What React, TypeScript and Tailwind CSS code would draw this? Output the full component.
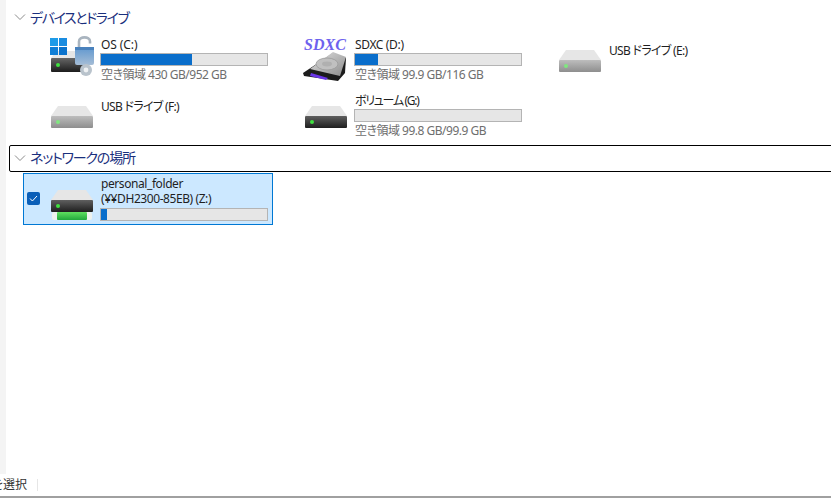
import React from 'react'

const font = "[font-family:'Noto_Sans','Noto_Sans_CJK_JP',sans-serif] [font-feature-settings:'palt']"

type Drive = {
    name: string
    icon: 'os' | 'sdxc' | 'dark' | 'usb'
    nameClass: string
    free?: string
    used?: number
}

const drives: Drive[] = [
    { name: 'OS (C:)', icon: 'os', nameClass: 'tracking-[-0.1px]', free: '空き領域 430 GB/952 GB', used: 91 },
    { name: 'SDXC (D:)', icon: 'sdxc', nameClass: 'tracking-[-0.35px]', free: '空き領域 99.9 GB/116 GB', used: 23 },
    { name: 'USB ドライブ (E:)', icon: 'usb', nameClass: 'tracking-[-0.7px]' },
    { name: 'USB ドライブ (F:)', icon: 'usb', nameClass: 'tracking-[-0.7px]' },
    { name: 'ボリューム (G:)', icon: 'dark', nameClass: 'tracking-[-1.3px]', free: '空き領域 99.8 GB/99.9 GB', used: 0 },
]

function Chevron() {
    return (
        <svg width="12" height="8" viewBox="0 0 12 8" className="shrink-0">
            <path d="M1 1.5 L6 6.5 L11 1.5" fill="none" stroke="#8c8c8c" strokeWidth="1" />
        </svg>
    )
}

// 共通のドライブ本体
function DriveBody({ id, dark }: { id: string; dark: boolean }) {
    return (
        <>
            <defs>
                <linearGradient id={id} x1="0" y1="0" x2="0" y2="1">
                    <stop offset="0" stopColor={dark ? '#5f5f5f' : '#bdbdbd'} />
                    <stop offset="1" stopColor={dark ? '#1e1e1e' : '#8e8e8e'} />
                </linearGradient>
            </defs>
            <path d="M10 16 H38 L45 26 H3 Z" fill="#e6e6e6" />
            <rect x="3" y="26" width="42" height="12" rx="1" fill={`url(#${id})`} />
            <circle cx="10" cy="32" r="2" fill={dark ? '#3fe03f' : '#7fe87f'} />
        </>
    )
}

function OsIcon() {
    return (
        <svg width="48" height="48" viewBox="0 0 48 48">
            <defs>
                <linearGradient id="osBody" x1="0" y1="0" x2="0" y2="1">
                    <stop offset="0" stopColor="#666666" />
                    <stop offset="1" stopColor="#1c1c1c" />
                </linearGradient>
                <linearGradient id="lockBody" x1="0" y1="0" x2="0" y2="1">
                    <stop offset="0" stopColor="#5f97cf" />
                    <stop offset="1" stopColor="#a5bdd6" />
                </linearGradient>
            </defs>
            <path d="M8 17 H30 L36 24 H3 Z" fill="#e6e6e6" />
            <rect x="3" y="24" width="38" height="14" rx="1" fill="url(#osBody)" />
            <circle cx="10" cy="31" r="2" fill="#3fe03f" />
            <rect x="2" y="4" width="8" height="8" fill="#1e9be8" />
            <rect x="11" y="4" width="8" height="8" fill="#1a8ce0" />
            <rect x="2" y="13" width="8" height="8" fill="#0f7ed6" />
            <rect x="11" y="13" width="8" height="8" fill="#0a72cc" />
            <path d="M31 13 V7.5 C31 2 42 2 42 7.5 V9.5" fill="none" stroke="#a9b4bf" strokeWidth="2.6" />
            <rect x="27" y="13" width="19" height="18" rx="2" fill="url(#lockBody)" />
            <rect x="27" y="13" width="19" height="3" fill="#4a82bd" />
            <circle cx="38" cy="36" r="6" fill="#b9c3cc" />
            <circle cx="38" cy="36" r="2.4" fill="#eef1f3" />
        </svg>
    )
}

function SdxcIcon() {
    return (
        <svg width="50" height="50" viewBox="0 0 50 50" className="overflow-visible">
            <defs>
                <linearGradient id="sdTop" x1="0" y1="0" x2="1" y2="1">
                    <stop offset="0" stopColor="#e2e2e2" />
                    <stop offset="1" stopColor="#8c8c8c" />
                </linearGradient>
            </defs>
            <path d="M31 19 L44 24 L43 39 L36 47 L2 42 L1 39 Z" fill="#1c1c1c" />
            <path d="M31 18 L44 23 L38 42 L8 35 Z" fill="url(#sdTop)" />
            <ellipse cx="25" cy="30" rx="11" ry="6" fill="#c0c0c0" stroke="#9a9a9a" strokeWidth="0.8" />
            <ellipse cx="25" cy="30" rx="5" ry="2.4" fill="#b0b0b0" />
            <path d="M9 39 L26 44 L24 46 L8 42 Z" fill="#6a35e8" />
            <text x="2" y="16" fontFamily="'Liberation Serif', serif" fontStyle="italic" fontWeight="bold" fontSize="16" fill="#6e62ee">SDXC</text>
        </svg>
    )
}

function NetworkIcon() {
    return (
        <svg width="48" height="48" viewBox="0 0 48 48">
            <defs>
                <linearGradient id="netGreen" x1="0" y1="0" x2="0" y2="1">
                    <stop offset="0" stopColor="#5fe05f" />
                    <stop offset="1" stopColor="#21a83c" />
                </linearGradient>
            </defs>
            <DriveBody id="netBody" dark={true} />
            <rect x="4" y="38" width="40" height="8" rx="2" fill="#eef2ee" />
            <rect x="9" y="38" width="30" height="8" rx="1" fill="url(#netGreen)" />
        </svg>
    )
}

function DriveIcon({ icon }: { icon: Drive['icon'] }) {
    if (icon === 'os') return <OsIcon />
    if (icon === 'sdxc') return <SdxcIcon />
    return (
        <svg width="48" height="48" viewBox="0 0 48 48">
            <DriveBody id={`body-${icon}`} dark={icon === 'dark'} />
        </svg>
    )
}

function Bar({ used }: { used: number }) {
    return (
        <div className="h-[13px] w-[168px] border border-[#b4b4b4] bg-[#e6e6e6]">
            <div className="h-full bg-[#0a6ecb]" style={{ width: used }}></div>
        </div>
    )
}

export default function App() {
    return (
        <div className={`flex h-[498px] w-[831px] flex-col overflow-hidden bg-white ${font}`}>
            <div className="flex flex-1">
                <div className="w-[6px] shrink-0 bg-[#f4f4f4]"></div>
                <div className="min-w-0 flex-1">
                    <div className="mt-[3px] mb-[3px] flex h-[28px] items-center gap-[4px] pl-[8px] text-[14px] text-[#1a2f7d]">
                        <Chevron />
                        <span className="tracking-[-1.4px]">デバイスとドライブ</span>
                    </div>

                    {/* ドライブ一覧 */}
                    <div className="ml-[18px] grid grid-cols-[254px_254px_254px] grid-rows-[56px_55px]">
                        {drives.map((d) => (
                            <div key={d.name} className="flex pl-[24px]">
                                <div className="h-[48px] w-[48px] shrink-0">
                                    <DriveIcon icon={d.icon} />
                                </div>
                                <div className={`ml-[4px] text-[12px] leading-[16px] ${d.free ? 'pt-[3px]' : 'pt-[9px]'}`}>
                                    <div className={`pl-[1px] text-[#1f1f1f] ${d.nameClass}`}>{d.name}</div>
                                    {d.free && (
                                        <>
                                            <Bar used={d.used ?? 0} />
                                            <div className="mt-[1px] pl-[1px] tracking-[-0.5px] text-[#6e6e6e]">{d.free}</div>
                                        </>
                                    )}
                                </div>
                            </div>
                        ))}
                    </div>

                    <div className="ml-[3px] -mr-[4px] flex h-[27px] items-center gap-[4px] rounded-[2px] border border-black pb-[2px] pl-[4px] text-[14px] text-[#1a2f7d]">
                        <Chevron />
                        <span className="tracking-[-1.2px]">ネットワークの場所</span>
                    </div>

                    {/* 選択中のドライブ */}
                    <div className="mt-[1px] ml-[17px] flex h-[52px] w-[250px] items-start border border-[#0078d4] bg-[#cce8ff]">
                        <div className="mt-[18px] ml-[3px] flex h-[13px] w-[13px] shrink-0 items-center justify-center rounded-[2px] bg-[#0a5fb8]">
                            <svg width="9" height="7" viewBox="0 0 9 7">
                                <path d="M1 3.5 L3.4 6 L8 1" fill="none" stroke="#ffffff" strokeWidth="1" />
                            </svg>
                        </div>
                        <div className="ml-[8px] h-[48px] w-[48px] shrink-0">
                            <NetworkIcon />
                        </div>
                        <div className="ml-[4px] pt-[2px] text-[12px] leading-[15px] tracking-[-0.42px] text-[#1f1f1f]">
                            <div className="pl-[1px]">personal_folder</div>
                            <div className="pl-[1px]">(¥¥DH2300-85EB) (Z:)</div>
                            <div className="mt-[2px]">
                                <Bar used={6} />
                            </div>
                        </div>
                    </div>
                </div>
            </div>

            {/* ステータスバー */}
            <div className="flex h-[24px] shrink-0 items-center border-b-[2px] border-[#a0a0a0] text-[12px] text-[#333333]">
                <span className="-ml-[8px] shrink-0">を選択</span>
                <div className="ml-[10px] h-[12px] w-px bg-[#e6e6e6]"></div>
            </div>
        </div>
    )
}
